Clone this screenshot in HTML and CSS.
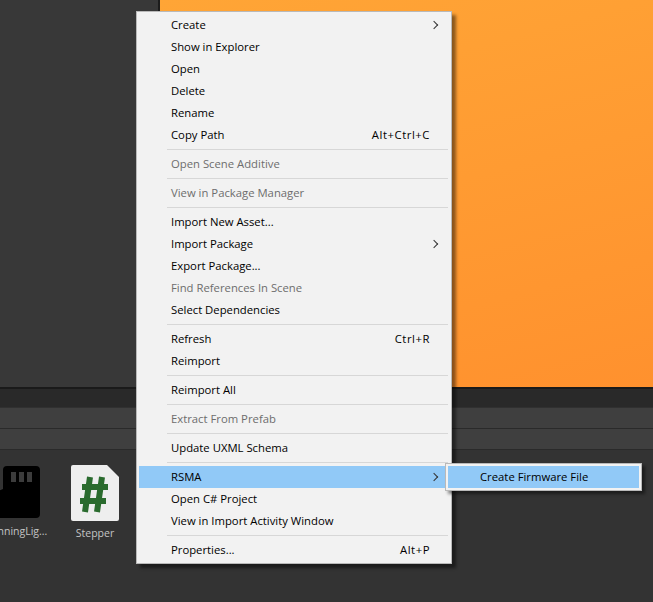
FILE: index.html
```html
<!DOCTYPE html>
<html>
<head>
    <title>Project context menu</title>
    <link rel="stylesheet" href="styles.css">
</head>
<body>
    <div class="top">
        <div class="hierarchy"></div>
        <div class="preview"></div>
    </div>
    <div class="tabbar"></div>
    <div class="toolbar"></div>
    <div class="toolbar"></div>
    <div class="assets">
        <div class="asset">
            <svg width="48" height="54" viewBox="0 0 48 54"><path d="M15 1H44a4 4 0 0 1 4 4V49a4 4 0 0 1-4 4H4a4 4 0 0 1-4-4V29l11-5V5a4 4 0 0 1 4-4z" fill="#000"/><rect x="19" y="7" width="5" height="10" fill="#3c3c3c"/><rect x="27" y="7" width="5" height="10" fill="#3c3c3c"/><rect x="35" y="7" width="5" height="10" fill="#3c3c3c"/></svg>
            <span class="asset-name">RunningLig...</span>
        </div>
        <div class="asset">
            <svg width="48" height="56" viewBox="0 0 48 56"><path d="M2 0H36L48 12V54a2 2 0 0 1-2 2H2a2 2 0 0 1-2-2V2a2 2 0 0 1 2-2z" fill="#eeeeee"/><path d="M19 12L14 47M31 12L26 47M11 22H37M9 36H35" stroke="#2a6b2e" stroke-width="6" fill="none"/></svg>
            <span class="asset-name">Stepper</span>
        </div>
    </div>

    <div class="menu">
        <div class="item has-sub">Create</div>
        <div class="item">Show in Explorer</div>
        <div class="item">Open</div>
        <div class="item">Delete</div>
        <div class="item">Rename</div>
        <div class="item">Copy Path<span class="key">Alt+Ctrl+C</span></div>
        <div class="sep"></div>
        <div class="item off">Open Scene Additive</div>
        <div class="sep"></div>
        <div class="item off">View in Package Manager</div>
        <div class="sep"></div>
        <div class="item">Import New Asset...</div>
        <div class="item has-sub">Import Package</div>
        <div class="item">Export Package...</div>
        <div class="item off">Find References In Scene</div>
        <div class="item">Select Dependencies</div>
        <div class="sep"></div>
        <div class="item">Refresh<span class="key">Ctrl+R</span></div>
        <div class="item">Reimport</div>
        <div class="sep"></div>
        <div class="item">Reimport All</div>
        <div class="sep"></div>
        <div class="item off">Extract From Prefab</div>
        <div class="sep"></div>
        <div class="item">Update UXML Schema</div>
        <div class="sep"></div>
        <div class="item has-sub active">RSMA</div>
        <div class="item">Open C# Project</div>
        <div class="item">View in Import Activity Window</div>
        <div class="sep"></div>
        <div class="item">Properties...<span class="key">Alt+P</span></div>
    </div>

    <div class="submenu">
        <div class="sub-item">Create Firmware File</div>
    </div>
</body>
</html>
```

FILE: styles.css
```css
* {
    box-sizing: border-box;
}

body {
    margin: 0;
    width: 653px;
    height: 602px;
    overflow: hidden;
    position: relative;
    background-color: #333333;
    font-family: "Open Sans", sans-serif;
    font-size: 11.3px;
}

.top {
    display: flex;
    height: 389px;
    border-bottom: 2px solid #1a1a1a;
}

.hierarchy {
    width: 160px;
    background-color: #383838;
    border-right: 2px solid #1c1c1c;
}

.preview {
    flex: 1;
    background: linear-gradient(165deg, #ffa536, #ff912e);
}

.tabbar {
    height: 19px;
    background-color: #292929;
    border-bottom: 1px solid #303030;
}

.toolbar {
    height: 21px;
    background-color: #3f3f3f;
    border-bottom: 1px solid #2a2a2a;
}

.toolbar:last-of-type {
    border-bottom: none;
}

.assets {
    display: flex;
    gap: 7px;
    padding-top: 15px;
    margin-left: -20px;
}

.asset {
    display: flex;
    flex-direction: column;
    align-items: center;
    width: 72px;
    height: 80px;
    gap: 5px;
}

.asset-name {
    color: #c4c4c4;
    font-size: 10.5px;
    white-space: nowrap;
}

.menu {
    position: absolute;
    left: 136px;
    top: 11px;
    width: 316px;
    padding: 2px;
    background-color: #f2f2f2;
    border: 1px solid #b9b9b9;
    box-shadow: 4px 4px 3px rgba(0, 0, 0, 0.45);
}

.item {
    display: flex;
    justify-content: space-between;
    height: 22px;
    line-height: 21px;
    padding: 0 19px 0 32px;
    color: #000;
    position: relative;
}

.key {
    letter-spacing: 0.55px;
}

.off {
    color: #6d6d6d;
}

.active {
    background-color: #91c9f7;
}

.has-sub::after {
    content: "";
    position: absolute;
    right: 12px;
    top: 8px;
    width: 5px;
    height: 5px;
    border-top: 1px solid #333;
    border-right: 1px solid #333;
    transform: rotate(45deg);
}

.sep {
    height: 1px;
    margin: 3px 1px 3px 28px;
    background-color: #d7d7d7;
}

.submenu {
    position: absolute;
    left: 445px;
    top: 463px;
    width: 197px;
    padding: 2px;
    background-color: #f2f2f2;
    border: 1px solid #b9b9b9;
    box-shadow: 3px 3px 3px rgba(0, 0, 0, 0.45);
}

.sub-item {
    height: 22px;
    line-height: 21px;
    padding-left: 32px;
    background-color: #91c9f7;
    color: #000;
}
```
